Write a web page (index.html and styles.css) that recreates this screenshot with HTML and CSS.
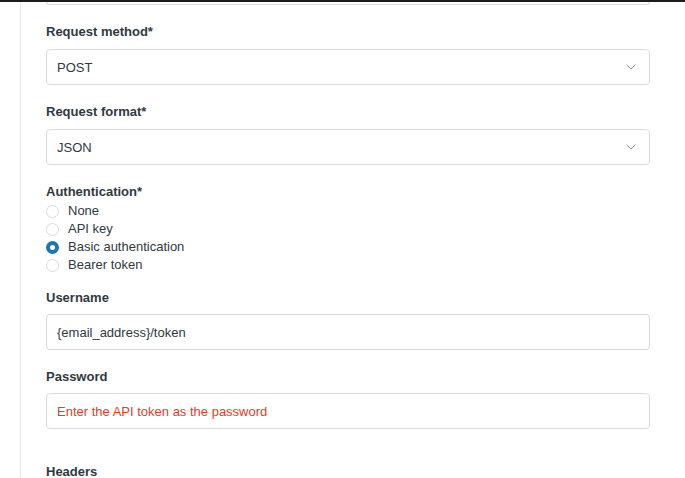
FILE: index.html
```html
<!DOCTYPE html>
<html lang="en">
<head>
<meta charset="utf-8">
<title>Webhook form</title>
<link rel="stylesheet" href="styles.css">
</head>
<body>
<div class="topbar"></div>
<div class="panel">
  <div class="form">
    <div class="prev-box"></div>

    <div class="field">
      <div class="label">Request method*</div>
      <div class="select">
        <span>POST</span>
        <svg class="chev" width="10" height="6" viewBox="0 0 10 6"><path d="M0.5 0.8 L5 5 L9.5 0.8" fill="none" stroke="#87929d" stroke-width="1"/></svg>
      </div>
    </div>

    <div class="field">
      <div class="label">Request format*</div>
      <div class="select">
        <span>JSON</span>
        <svg class="chev" width="10" height="6" viewBox="0 0 10 6"><path d="M0.5 0.8 L5 5 L9.5 0.8" fill="none" stroke="#87929d" stroke-width="1"/></svg>
      </div>
    </div>

    <div class="field">
      <div class="label">Authentication*</div>
      <div class="radios">
        <div class="radio"><span class="dot"></span><span>None</span></div>
        <div class="radio"><span class="dot"></span><span>API key</span></div>
        <div class="radio"><span class="dot checked"></span><span>Basic authentication</span></div>
        <div class="radio"><span class="dot"></span><span>Bearer token</span></div>
      </div>
    </div>

    <div class="field field-user">
      <div class="label">Username</div>
      <div class="input">{email_address}/token</div>
    </div>

    <div class="field">
      <div class="label">Password</div>
      <div class="input input-error">Enter the API token as the password</div>
    </div>

    <div class="field field-headers">
      <div class="label">Headers</div>
    </div>
  </div>
</div>
</body>
</html>
```

FILE: styles.css
```css
html, body {
  margin: 0;
  padding: 0;
  background: #ffffff;
}

body {
  font-family: "Liberation Sans", Arial, sans-serif;
  color: #2f3941;
  font-size: 13px;
  height: 478px;
  overflow: hidden;
}

.topbar {
  height: 2px;
  background: #1c1c1c;
}

.panel {
  margin-left: 20px;
  border-left: 1px solid #e6e8ea;
  padding-left: 25px;
  min-height: 476px;
}

.form {
  width: 604px;
}

.prev-box {
  height: 2px;
  border: 1px solid #d8dcde;
  border-top: none;
  border-radius: 0 0 4px 4px;
}

.field {
  margin-top: 17px;
}

.label {
  font-weight: 700;
  font-size: 13px;
  line-height: 20px;
  color: #2f3941;
}

.select,
.input {
  box-sizing: border-box;
  height: 36px;
  border: 1px solid #d8dcde;
  border-radius: 4px;
  padding: 0 13px 0 10px;
  display: flex;
  align-items: center;
  justify-content: space-between;
  font-size: 13px;
  color: #2f3941;
}

.select {
  margin-top: 7px;
}

.input {
  margin-top: 6px;
}

.chev {
  display: block;
}

.input-error {
  color: #e2401c;
}

.radios {
  margin-top: 0;
  display: flex;
  flex-direction: column;
}

.radio {
  display: flex;
  align-items: center;
  gap: 9px;
  line-height: 18px;
  height: 18px;
}

.dot {
  box-sizing: border-box;
  width: 13px;
  height: 13px;
  border: 1px solid #d8dcde;
  border-radius: 50%;
  background: #fff;
  flex: none;
}

.dot.checked {
  border: 4px solid #1f73b7;
  background: #fff;
}

.field-user {
  margin-top: 14px;
}

.field-headers {
  margin-top: 33px;
}
```
